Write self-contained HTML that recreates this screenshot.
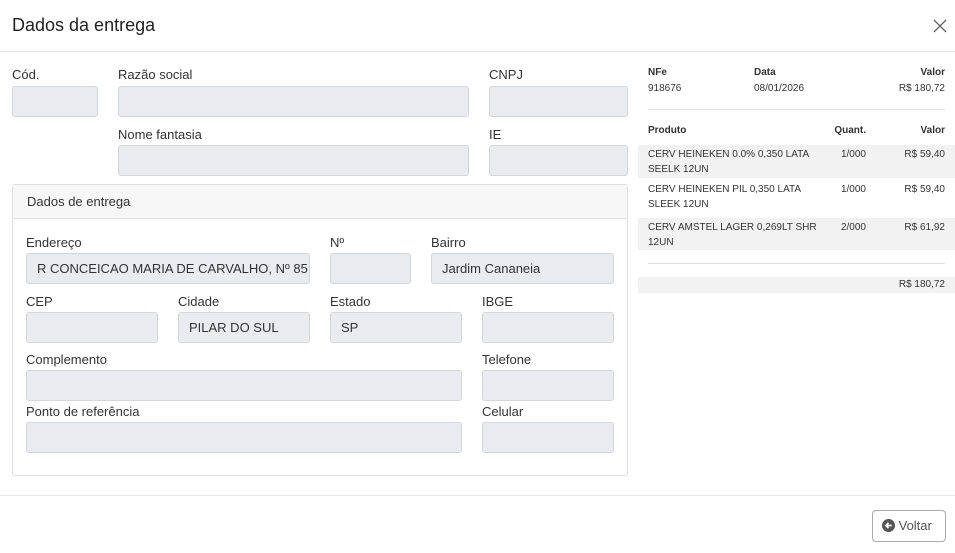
<!DOCTYPE html>
<html><head><meta charset="utf-8"><style>
*{box-sizing:border-box;margin:0;padding:0}
body{width:955px;height:553px;background:#fff;font-family:"Liberation Sans",sans-serif;color:#333;position:relative;overflow:hidden}
.a{position:absolute}
.l{position:absolute;font-size:13px;color:#333;white-space:nowrap}
.i{position:absolute;height:31px;background:#e9ebee;border:1px solid #d3d6da;border-radius:3px;font-size:13px;color:#333;padding:0 10px;line-height:29px;white-space:nowrap;overflow:hidden}
.s{position:absolute;font-size:10px;color:#333;white-space:nowrap}
.b{font-weight:bold}
.r{text-align:right}
</style></head><body>
<div class="a" style="left:12px;top:15px;font-size:18px;color:#222">Dados da entrega</div>
<svg class="a" style="left:933px;top:19px" width="14" height="14" viewBox="0 0 14 14"><path d="M1 1L13 13M13 1L1 13" stroke="#666" stroke-width="1.3"/></svg>
<div class="a" style="left:0;top:51px;width:955px;height:1px;background:#e5e5e5"></div>

<div class="l" style="left:12px;top:67px">Cód.</div>
<div class="l" style="left:118px;top:67px">Razão social</div>
<div class="l" style="left:489px;top:67px">CNPJ</div>
<div class="i" style="left:12px;top:86px;width:86px"></div>
<div class="i" style="left:118px;top:86px;width:351px"></div>
<div class="i" style="left:489px;top:86px;width:139px"></div>
<div class="l" style="left:118px;top:127px">Nome fantasia</div>
<div class="l" style="left:489px;top:127px">IE</div>
<div class="i" style="left:118px;top:145px;width:351px"></div>
<div class="i" style="left:489px;top:145px;width:139px"></div>

<div class="a" style="left:12px;top:184px;width:616px;height:292px;border:1px solid #dfdfdf;border-radius:3px"></div>
<div class="a" style="left:13px;top:185px;width:614px;height:34px;background:#f7f7f7;border-bottom:1px solid #dfdfdf"></div>
<div class="l" style="left:27px;top:194px">Dados de entrega</div>

<div class="l" style="left:26px;top:235px">Endereço</div>
<div class="l" style="left:330px;top:235px">Nº</div>
<div class="l" style="left:431px;top:235px">Bairro</div>
<div class="i" style="left:26px;top:253px;width:284px">R CONCEICAO MARIA DE CARVALHO, Nº 85</div>
<div class="i" style="left:330px;top:253px;width:81px"></div>
<div class="i" style="left:431px;top:253px;width:183px">Jardim Cananeia</div>

<div class="l" style="left:26px;top:294px">CEP</div>
<div class="l" style="left:178px;top:294px">Cidade</div>
<div class="l" style="left:330px;top:294px">Estado</div>
<div class="l" style="left:482px;top:294px">IBGE</div>
<div class="i" style="left:26px;top:312px;width:132px"></div>
<div class="i" style="left:178px;top:312px;width:132px">PILAR DO SUL</div>
<div class="i" style="left:330px;top:312px;width:132px">SP</div>
<div class="i" style="left:482px;top:312px;width:132px"></div>

<div class="l" style="left:26px;top:352px">Complemento</div>
<div class="l" style="left:482px;top:352px">Telefone</div>
<div class="i" style="left:26px;top:370px;width:436px"></div>
<div class="i" style="left:482px;top:370px;width:132px"></div>

<div class="l" style="left:26px;top:404px">Ponto de referência</div>
<div class="l" style="left:482px;top:404px">Celular</div>
<div class="i" style="left:26px;top:422px;width:436px"></div>
<div class="i" style="left:482px;top:422px;width:132px"></div>

<div class="s b" style="left:648px;top:67px">NFe</div>
<div class="s b" style="left:754px;top:67px">Data</div>
<div class="s b r" style="left:845px;top:67px;width:100px">Valor</div>
<div class="s" style="left:648px;top:83px">918676</div>
<div class="s" style="left:754px;top:83px">08/01/2026</div>
<div class="s r" style="left:845px;top:83px;width:100px">R$ 180,72</div>
<div class="a" style="left:648px;top:109px;width:297px;height:1px;background:#ddd"></div>

<div class="s b" style="left:648px;top:125px">Produto</div>
<div class="s b r" style="left:786px;top:125px;width:80px">Quant.</div>
<div class="s b r" style="left:845px;top:125px;width:100px">Valor</div>

<div class="a" style="left:638px;top:145px;width:317px;height:33px;background:#f2f2f2"></div>
<div class="s" style="left:648px;top:147px;line-height:15px">CERV HEINEKEN 0.0% 0,350 LATA<br>SEELK 12UN</div>
<div class="s r" style="left:786px;top:147px;width:80px;line-height:15px">1/000</div>
<div class="s r" style="left:845px;top:147px;width:100px;line-height:15px">R$ 59,40</div>

<div class="s" style="left:648px;top:182px;line-height:15px">CERV HEINEKEN PIL 0,350 LATA<br>SLEEK 12UN</div>
<div class="s r" style="left:786px;top:182px;width:80px;line-height:15px">1/000</div>
<div class="s r" style="left:845px;top:182px;width:100px;line-height:15px">R$ 59,40</div>

<div class="a" style="left:638px;top:218px;width:317px;height:32px;background:#f2f2f2"></div>
<div class="s" style="left:648px;top:220px;line-height:15px">CERV AMSTEL LAGER 0,269LT SHR<br>12UN</div>
<div class="s r" style="left:786px;top:220px;width:80px;line-height:15px">2/000</div>
<div class="s r" style="left:845px;top:220px;width:100px;line-height:15px">R$ 61,92</div>

<div class="a" style="left:648px;top:263px;width:297px;height:1px;background:#ddd"></div>
<div class="a" style="left:638px;top:277px;width:317px;height:16px;background:#f2f2f2"></div>
<div class="s r" style="left:845px;top:279px;width:100px">R$ 180,72</div>

<div class="a" style="left:0;top:495px;width:955px;height:1px;background:#e5e5e5"></div>
<div class="a" style="left:872px;top:510px;width:74px;height:32px;border:1px solid #aaa;border-radius:4px;font-size:13px;color:#555;line-height:30px;padding-left:9px">
<svg style="vertical-align:-2px" width="13" height="13" viewBox="0 0 14 14"><circle cx="7" cy="7" r="7" fill="#555"/><path d="M10.5 7H4.5M7 4.2L4.2 7L7 9.8" stroke="#fff" stroke-width="1.8" fill="none"/></svg> Voltar</div>
</body></html>
